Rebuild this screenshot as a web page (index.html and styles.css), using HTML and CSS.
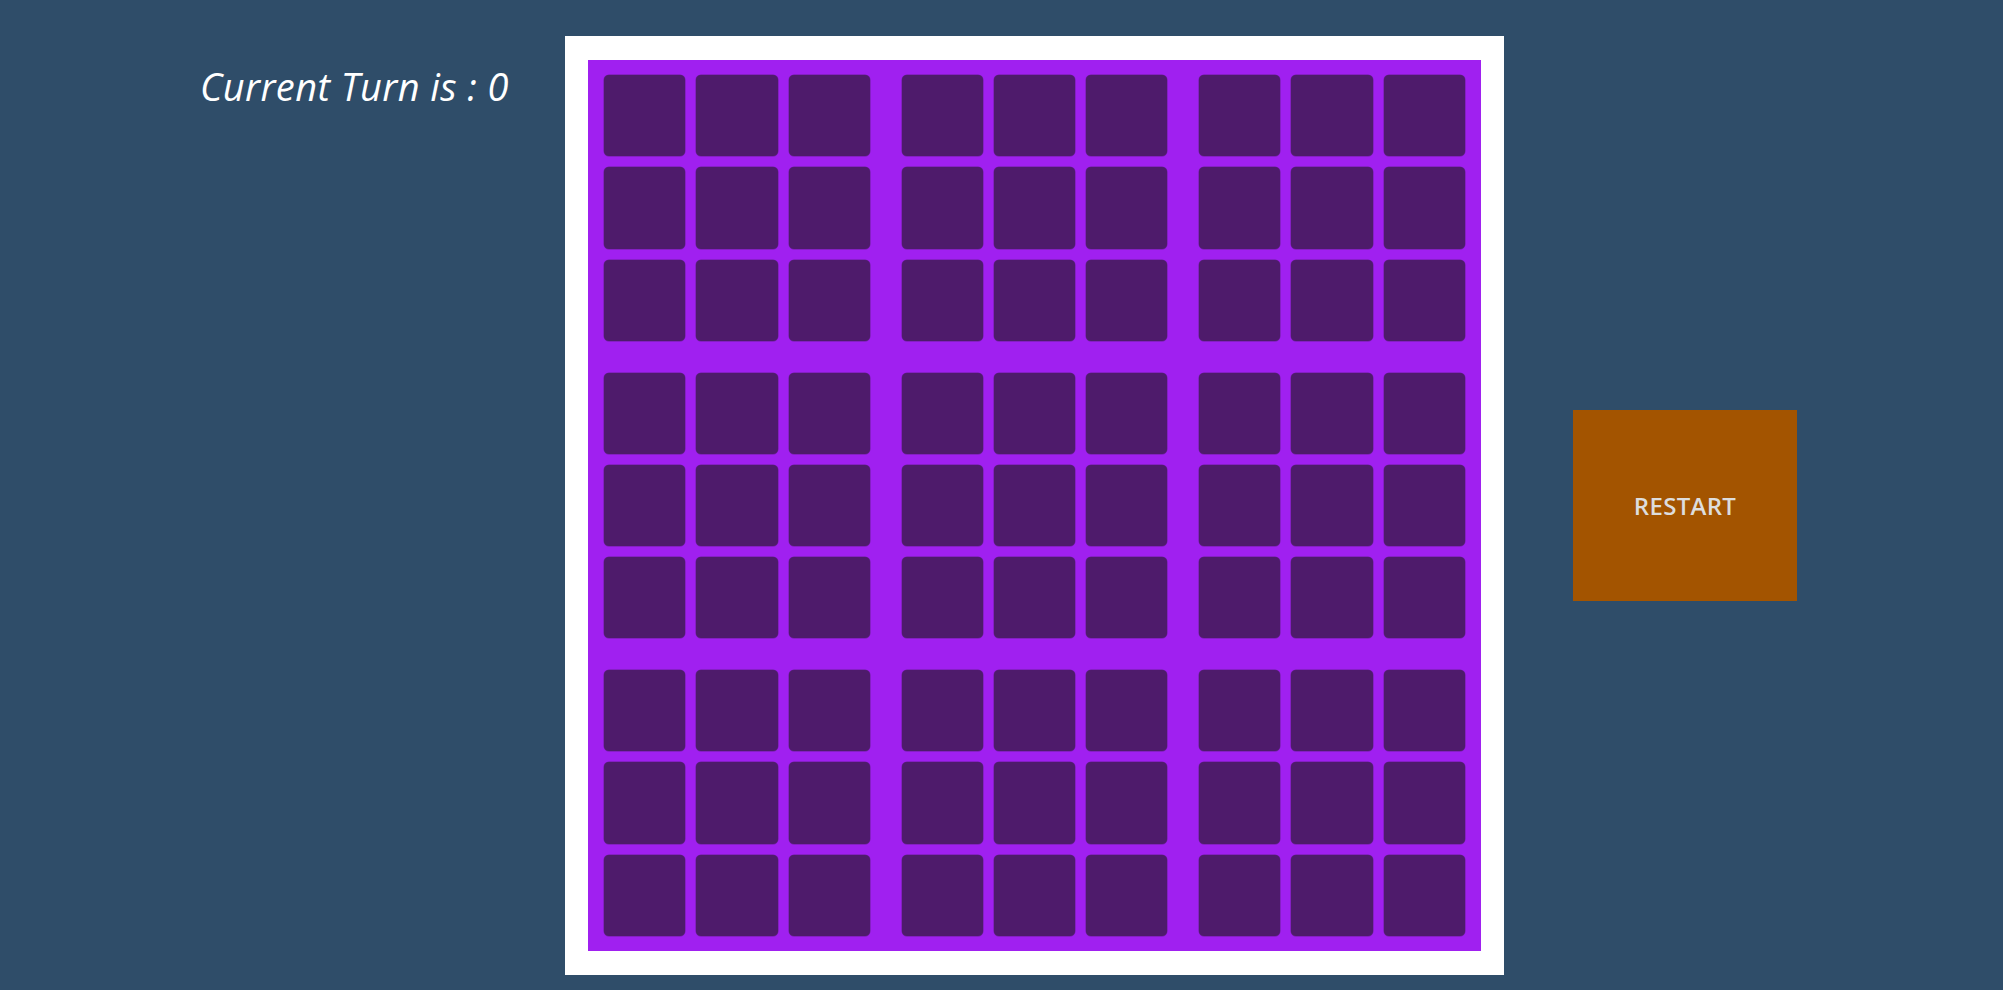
FILE: index.html
```html
<!DOCTYPE html>
<html>
<head>
<meta charset="utf-8">
<link rel="stylesheet" href="styles.css">
</head>
<body>
<div class="page">
  <div class="turn">Current Turn is : 0</div>
  <div class="frame">
    <div class="board">
      <div class="block"><div class="cell"></div><div class="cell"></div><div class="cell"></div><div class="cell"></div><div class="cell"></div><div class="cell"></div><div class="cell"></div><div class="cell"></div><div class="cell"></div></div>
      <div class="block"><div class="cell"></div><div class="cell"></div><div class="cell"></div><div class="cell"></div><div class="cell"></div><div class="cell"></div><div class="cell"></div><div class="cell"></div><div class="cell"></div></div>
      <div class="block"><div class="cell"></div><div class="cell"></div><div class="cell"></div><div class="cell"></div><div class="cell"></div><div class="cell"></div><div class="cell"></div><div class="cell"></div><div class="cell"></div></div>
      <div class="block"><div class="cell"></div><div class="cell"></div><div class="cell"></div><div class="cell"></div><div class="cell"></div><div class="cell"></div><div class="cell"></div><div class="cell"></div><div class="cell"></div></div>
      <div class="block"><div class="cell"></div><div class="cell"></div><div class="cell"></div><div class="cell"></div><div class="cell"></div><div class="cell"></div><div class="cell"></div><div class="cell"></div><div class="cell"></div></div>
      <div class="block"><div class="cell"></div><div class="cell"></div><div class="cell"></div><div class="cell"></div><div class="cell"></div><div class="cell"></div><div class="cell"></div><div class="cell"></div><div class="cell"></div></div>
      <div class="block"><div class="cell"></div><div class="cell"></div><div class="cell"></div><div class="cell"></div><div class="cell"></div><div class="cell"></div><div class="cell"></div><div class="cell"></div><div class="cell"></div></div>
      <div class="block"><div class="cell"></div><div class="cell"></div><div class="cell"></div><div class="cell"></div><div class="cell"></div><div class="cell"></div><div class="cell"></div><div class="cell"></div><div class="cell"></div></div>
      <div class="block"><div class="cell"></div><div class="cell"></div><div class="cell"></div><div class="cell"></div><div class="cell"></div><div class="cell"></div><div class="cell"></div><div class="cell"></div><div class="cell"></div></div>
    </div>
  </div>
  <button class="restart">RESTART</button>
</div>
</body>
</html>
```
FILE: styles.css
```css
html, body {
  margin: 0;
  padding: 0;
}
body {
  background: #2f4d69;
  height: 990px;
  overflow: hidden;
}
.page {
  display: flex;
  align-items: flex-start;
  padding-top: 36px;
}
.turn {
  box-sizing: border-box;
  width: 565px;
  padding-left: 200px;
  padding-top: 25px;
  font-family: "Open Sans", sans-serif;
  font-style: italic;
  font-weight: 400;
  font-size: 38px;
  letter-spacing: 0.4px;
  line-height: 50px;
  color: #ffffff;
  white-space: nowrap;
}
.frame {
  background: #ffffff;
  padding: 24px 23px;
}
.board {
  background: #a020f0;
  box-sizing: border-box;
  width: 893px;
  height: 891px;
  padding: 15px 16px;
  display: grid;
  grid-template-columns: repeat(3, 1fr);
  grid-template-rows: repeat(3, 1fr);
  gap: 31.67px;
}
.block {
  display: grid;
  grid-template-columns: repeat(3, 1fr);
  grid-template-rows: repeat(3, 1fr);
  gap: 11px;
}
.cell {
  background: #4e1b6b;
  border-radius: 5px;
  box-shadow: 0 0 0 0.5px #6a1f98;
}
.restart {
  align-self: center;
  margin-left: 69px;
  width: 224px;
  height: 191px;
  background: #a35400;
  border: none;
  color: #dddddd;
  font-family: "Open Sans", sans-serif;
  font-weight: 600;
  font-size: 24px;
  letter-spacing: 0.3px;
  padding: 0;
}
```
